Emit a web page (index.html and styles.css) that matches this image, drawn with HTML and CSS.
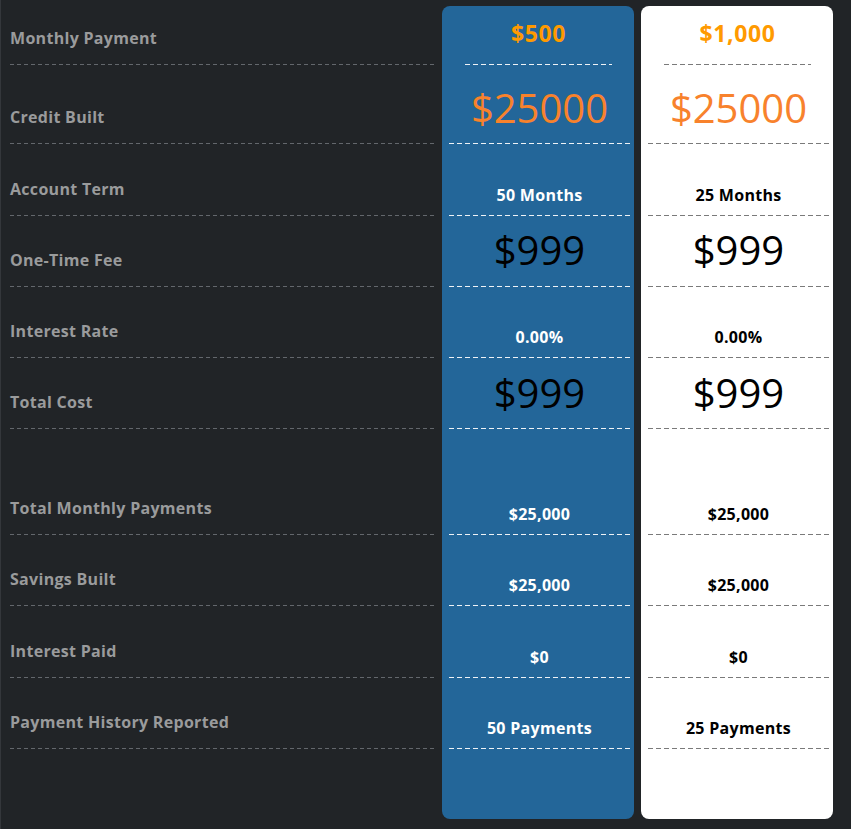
FILE: index.html
```html
<!DOCTYPE html>
<html lang="en">
<head>
<meta charset="utf-8">
<title>Plan comparison</title>
<link rel="stylesheet" href="styles.css">
</head>
<body>
<div class="compare">
  <div class="col labels">
    <div class="row h1 lab">Monthly Payment</div>
    <div class="row h2 lab">Credit Built</div>
    <div class="row h3 lab">Account Term</div>
    <div class="row h4 lab">One-Time Fee</div>
    <div class="row h5 lab">Interest Rate</div>
    <div class="row h6 lab">Total Cost</div>
    <div class="row h7 lab">Total Monthly Payments</div>
    <div class="row h8 lab">Savings Built</div>
    <div class="row h9 lab">Interest Paid</div>
    <div class="row h10 lab">Payment History Reported</div>
  </div>
  <div class="col card blue">
    <div class="row h1 head"><span class="price">$500</span></div>
    <div class="row h2 big"><span class="credit">$25000</span></div>
    <div class="row h3 val">50 Months</div>
    <div class="row h4 big"><span class="fee">$999</span></div>
    <div class="row h5 val">0.00%</div>
    <div class="row h6 big"><span class="fee">$999</span></div>
    <div class="row h7 val">$25,000</div>
    <div class="row h8 val">$25,000</div>
    <div class="row h9 val">$0</div>
    <div class="row h10 val">50 Payments</div>
  </div>
  <div class="col card white">
    <div class="row h1 head"><span class="price">$1,000</span></div>
    <div class="row h2 big"><span class="credit">$25000</span></div>
    <div class="row h3 val">25 Months</div>
    <div class="row h4 big"><span class="fee">$999</span></div>
    <div class="row h5 val">0.00%</div>
    <div class="row h6 big"><span class="fee">$999</span></div>
    <div class="row h7 val">$25,000</div>
    <div class="row h8 val">$25,000</div>
    <div class="row h9 val">$0</div>
    <div class="row h10 val">25 Payments</div>
  </div>
</div>
</body>
</html>
```
FILE: styles.css
```css
html, body {
  margin: 0;
  padding: 0;
  background: #212427;
}
body {
  font-family: "Open Sans", "Noto Sans", sans-serif;
  width: 851px;
  height: 829px;
  overflow: hidden;
  box-shadow: inset 1px 0 0 #34373b;
}
.compare {
  display: flex;
  align-items: flex-start;
  padding-top: 6px;
}
.col {
  display: flex;
  flex-direction: column;
}
.labels {
  width: 426px;
  margin-left: 10px;
  margin-right: 6px;
}
.card {
  width: 192px;
  box-sizing: border-box;
  border-radius: 8px;
  padding: 0 4px 70px 7px;
}
.card + .card { margin-left: 7px; }
.blue { background-color: #236699; }
.white { background-color: #ffffff; }

.row {
  box-sizing: border-box;
  display: flex;
  flex-direction: column;
  justify-content: flex-end;
  align-items: center;
  background-repeat: no-repeat;
  background-position: left bottom;
  background-size: 100% 1px;
}
.labels .row {
  align-items: flex-start;
  background-image: repeating-linear-gradient(90deg, #63676c 0 4px, transparent 4px 7px);
}
.blue .row {
  background-image: repeating-linear-gradient(90deg, #eef2f6 0 5px, transparent 5px 8px);
}
.white .row {
  background-image: repeating-linear-gradient(90deg, #7a7a7a 0 5px, transparent 5px 8px);
}

.h1 { height: 59px; }
.h2 { height: 79px; }
.h3 { height: 72px; }
.h4 { height: 71px; }
.h5 { height: 71px; }
.h6 { height: 71px; }
.h7 { height: 106px; }
.h8 { height: 71px; }
.h9 { height: 72px; }
.h10 { height: 71px; }

.labels .h1 { margin-top: -6px; height: 65px; }

.lab {
  font-size: 16px;
  font-weight: 700;
  line-height: 20px;
  color: #9a9b9c;
  padding-bottom: 17px;
  letter-spacing: 0.3px;
}

.card .head {
  margin: 0 18px 0 16px;
  padding-bottom: 19px;
}
.price {
  font-size: 23px;
  font-weight: 700;
  line-height: 26px;
  color: #ff9a00;
  letter-spacing: 0.6px;
}
.big {
  padding-bottom: 12px;
}
.credit {
  font-size: 40px;
  line-height: 48px;
  color: #f8822c;
}
.fee {
  font-size: 40px;
  line-height: 48px;
  color: #000000;
}
.big.h4 { padding-bottom: 13px; }
.big.h6 { padding-bottom: 12px; }

.val {
  font-size: 16px;
  font-weight: 700;
  line-height: 20px;
  padding-bottom: 11px;
  letter-spacing: 0.3px;
}
.blue .val { color: #ffffff; }
.white .val { color: #000000; }
```
